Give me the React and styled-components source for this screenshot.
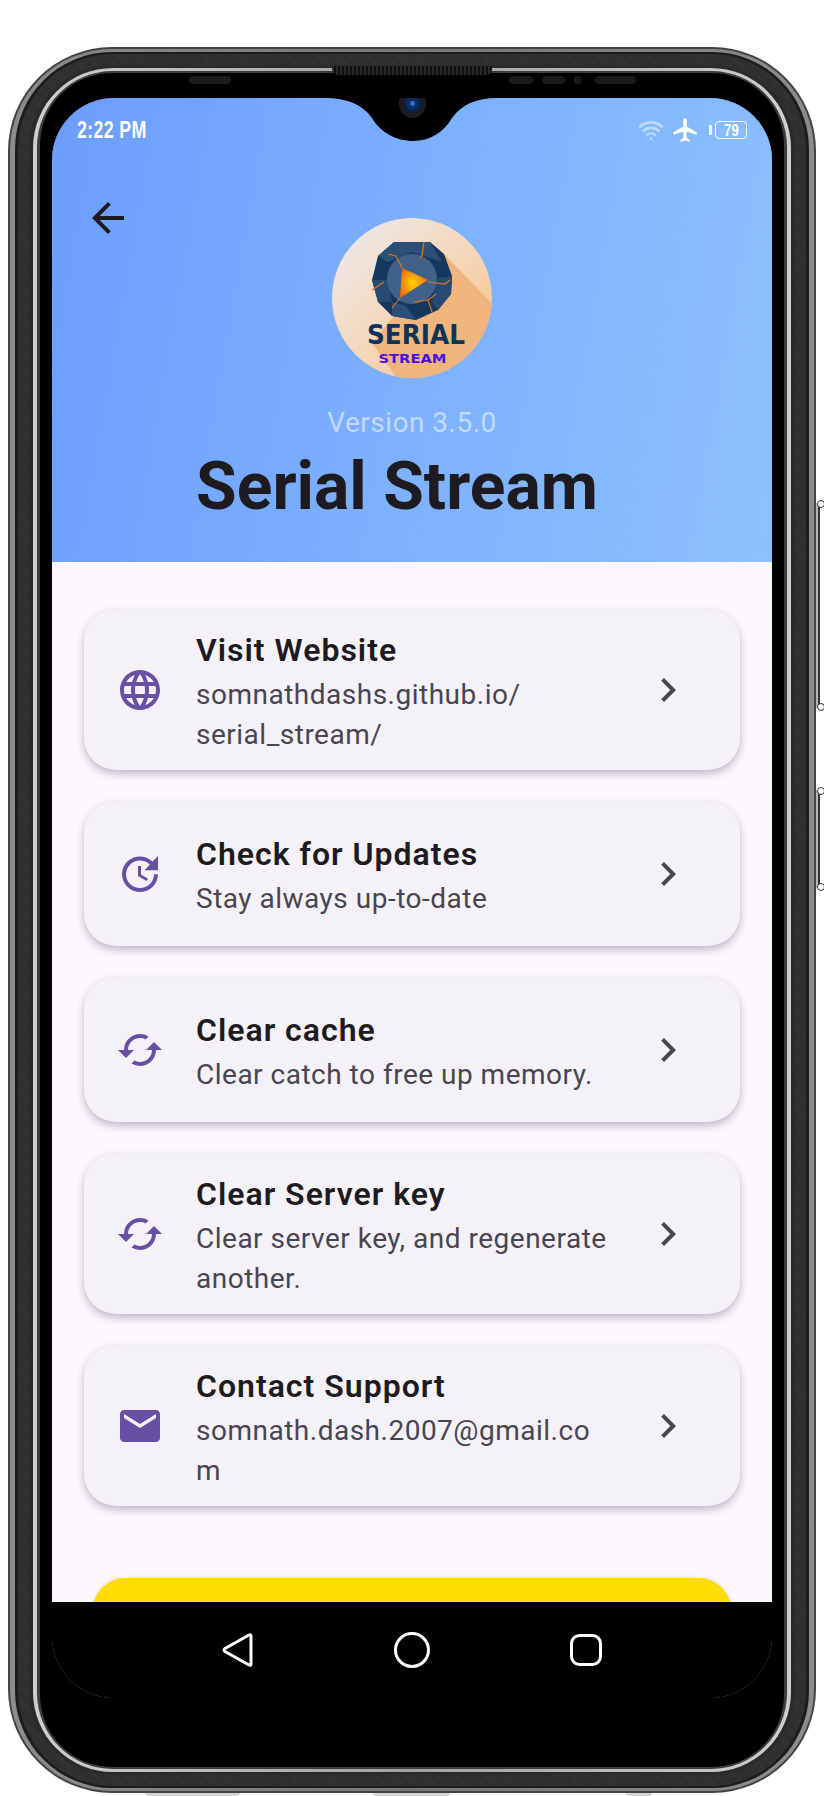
import React from "react";
import styled, { createGlobalStyle } from "styled-components";
import { MdArrowBack, MdLanguage, MdUpdate, MdSync, MdEmail, MdChevronRight, MdAirplanemodeActive } from "react-icons/md";
import { Wifi } from "lucide-react";

const Global = createGlobalStyle`
  html, body { margin: 0; padding: 0; background: #fff; }
  body { width: 824px; height: 1796px; overflow: hidden; font-family: Roboto, "Liberation Sans", sans-serif; }
  * { box-sizing: border-box; }
`;

const Page = styled.div`
  width: 824px;
  height: 1796px;
  padding: 47px 8px 3px;
`;

const Ring = styled.div`
  position: relative;
  background: ${(p) => p.$bg};
  padding: ${(p) => p.$py}px ${(p) => p.$px}px;
  border-radius: ${(p) => p.$radius}px;
`;

const SideButton = styled.div`
  position: absolute;
  right: -4px;
  top: ${(p) => p.$top}px;
  height: ${(p) => p.$height}px;
  width: 4px;
  background: #333;
  border-left: 2px solid #b5b5b5;

  &::before,
  &::after {
    content: "";
    position: absolute;
    left: -1px;
    width: 6px;
    height: 6px;
    border: 1.5px solid #333;
    border-radius: 50%;
    background: #fff;
  }
  &::before { top: -3px; }
  &::after { bottom: -3px; }
`;

const BottomBump = styled.div`
  position: absolute;
  bottom: -3px;
  left: ${(p) => p.$left}px;
  width: ${(p) => p.$width}px;
  height: 3px;
  background: #d4d4d4;
  border-radius: 0 0 3px 3px;
`;

const Bezel = styled.div`
  position: relative;
  background: #000;
  border-radius: 72px;
  padding: 0 12px 69px;
`;

const Speaker = styled.div`
  position: absolute;
  left: 292px;
  top: -7px;
  width: 160px;
  height: 9px;
  border-radius: 0 0 6px 6px;
  background: repeating-linear-gradient(90deg, #2c2c2c 0 2px, #111 2px 4px);
`;

const SensorRow = styled.div`
  height: 25px;
  display: flex;
  align-items: flex-start;
  padding: 3px 0 0 137px;
`;

const Sensor = styled.span`
  display: block;
  flex: none;
  height: 8px;
  width: ${(p) => p.$w}px;
  margin-left: ${(p) => p.$gap}px;
  border-radius: 4px;
  background: #1b1b1b;
`;

const Screen = styled.div`
  position: relative;
  width: 720px;
  height: 1600px;
  border-radius: 62px;
  overflow: hidden;
  display: flex;
  flex-direction: column;
  background: #fef7ff;
  box-shadow: inset 0 0 0 1px #14082a;
`;

const NotchWrap = styled.div`
  position: absolute;
  top: 0;
  left: 274px;
  width: 171px;
  height: 43px;
  z-index: 3;
  line-height: 0;
`;

const Camera = styled.div`
  position: absolute;
  top: -9px;
  left: 73px;
  width: 27px;
  height: 29px;
  border-radius: 50%;
  background: radial-gradient(circle at 50% 50%, #2a6fc4 0 2px, #0a2c63 3px 6px, #0a1e3f 8px, #1c1c20 10px);
`;

const Header = styled.header`
  flex: none;
  height: 464px;
  background: linear-gradient(100deg, #6b9dfe 0%, #7db0ff 50%, #8cc1ff 100%);
  color: #1d1b20;
`;

const StatusBar = styled.div`
  height: 64px;
  padding: 0 25px;
  display: flex;
  align-items: center;
  justify-content: space-between;
  color: #fff;
`;

const Clock = styled.span`
  display: inline-block;
  width: 70px;
  font: 700 24px/1 "Liberation Sans", sans-serif;
  white-space: nowrap;
  transform: scaleX(0.74);
  transform-origin: left center;
  letter-spacing: 0.5px;
`;

const StatusIcons = styled.div`
  display: flex;
  align-items: center;
`;

const DimWifi = styled(Wifi)`
  opacity: 0.45;
  margin-right: 9px;
`;

const Plane = styled(MdAirplanemodeActive)`
  margin-left: -2px;
`;

const BatteryNub = styled.span`
  width: 3px;
  height: 10px;
  background: #fff;
  border-radius: 1px;
  margin: 0 3px 0 10px;
`;

const Battery = styled.span`
  width: 32px;
  height: 18px;
  border: 1.5px solid #fff;
  border-radius: 4px;
  display: flex;
  align-items: center;
  justify-content: center;
  font: 700 17px/1 "Liberation Sans", sans-serif;
  color: #fff;
`;

const BatteryText = styled.span`
  display: inline-block;
  transform: scaleX(0.78);
`;

const Hero = styled.div`
  display: grid;
  grid-template-columns: 1fr auto 1fr;
  padding: 32px 32px 0;
`;

const BackButton = styled.div`
  width: 48px;
  height: 48px;
  color: #1d1b20;
  line-height: 0;
`;

const LogoBox = styled.div`
  width: 160px;
  height: 160px;
  margin-top: 24px;
  line-height: 0;
`;

const Version = styled.div`
  margin-top: 27px;
  text-align: center;
  font-size: 28px;
  line-height: 36px;
  letter-spacing: 0.5px;
  color: rgba(255, 255, 255, 0.55);
`;

const AppName = styled.h1`
  margin: 10px 0 0;
  padding-right: 30px;
  text-align: center;
  font-size: 66px;
  line-height: 72px;
  font-weight: 700;
  color: #1d1b20;
`;

const Body = styled.main`
  flex: 1;
  min-height: 0;
  overflow: hidden;
  padding: 47px 32px 0;
  background: #fef7ff;
`;

const CardList = styled.div`
  display: flex;
  flex-direction: column;
  gap: 31px;
`;

const Card = styled.div`
  min-height: 145px;
  padding: 16px 48px 16px 32px;
  display: grid;
  grid-template-columns: 48px 32px 414px 34px 48px;
  align-items: center;
  border-radius: 32px;
  background: #f5f1f8;
  box-shadow: 0 4px 8px rgba(40, 30, 50, 0.28), 0 0 2px rgba(40, 30, 50, 0.06);
`;

const CardIcon = styled.div`
  grid-column: 1;
  color: #6750a4;
  line-height: 0;
`;

const SyncIcon = styled(MdSync)`
  transform: rotate(90deg);
`;

const CardText = styled.div`
  grid-column: 3;
  min-width: 0;
`;

const CardTitle = styled.div`
  font-size: 32px;
  line-height: 50px;
  font-weight: 600;
  letter-spacing: 1px;
  color: #1d1b20;
`;

const CardSub = styled.div`
  font-size: 28px;
  line-height: 39.5px;
  letter-spacing: 0.5px;
  color: #49454f;
  overflow-wrap: anywhere;
`;

const CardChevron = styled.div`
  grid-column: 5;
  color: #49454f;
  line-height: 0;
`;

const DonateButton = styled.div`
  margin: 72px 9px 0;
  height: 120px;
  border-radius: 32px;
  background: #ffdd00;
  box-shadow: 0 0 4px rgba(60, 40, 80, 0.15);
`;

const NavBar = styled.nav`
  flex: none;
  height: 96px;
  background: #000;
  display: grid;
  grid-template-columns: repeat(3, 174px);
  justify-content: center;
  align-items: center;
`;

const NavItem = styled.div`
  display: flex;
  justify-content: center;
  align-items: center;
  height: 96px;
  line-height: 0;
`;

const Logo = () => (
  <svg viewBox="0 0 160 160" width="160" height="160">
    <defs>
      <linearGradient id="lg" x1="0" y1="0" x2="1" y2="1">
        <stop offset="0" stopColor="#ececf2" />
        <stop offset="0.55" stopColor="#f5d6b6" />
        <stop offset="1" stopColor="#f8bd82" />
      </linearGradient>
      <clipPath id="lc"><circle cx="80" cy="80" r="80" /></clipPath>
      <radialGradient id="tri" cx="0.45" cy="0.5" r="0.6">
        <stop offset="0" stopColor="#ffd500" />
        <stop offset="1" stopColor="#ff5a00" />
      </radialGradient>
    </defs>
    <circle cx="80" cy="80" r="80" fill="url(#lg)" />
    <g clipPath="url(#lc)">
      <polygon points="112,36 170,96 170,170 72,170 40,125" fill="#efb57d" />
    </g>
    <polygon points="62,24 98,24 112,36 120,58 119,76 106,92 84,102 60,98 46,84 40,62 46,38" fill="#16375c" />
    <polygon points="62,24 98,24 110,44 80,34 56,44 46,38" fill="#2c4f78" />
    <polygon points="40,62 56,62 60,84 46,84" fill="#264a72" />
    <polygon points="60,84 74,88 84,102 60,98" fill="#2a4f78" />
    <polygon points="120,58 106,60 100,84 106,92 119,76" fill="#264a72" />
    <circle cx="80" cy="61" r="25" fill="#41618a" />
    <g fill="none" stroke="#d9761a" strokeWidth="1.2">
      <path d="M56 36 L64 38 L70 50" />
      <path d="M96 64 L113 66 L118 62" />
      <path d="M68 80 L60 90" />
      <path d="M40 72 L52 64" />
      <path d="M82 84 L96 82 L100 94 M96 82 L104 76" />
      <path d="M92 24 L90 38 L88 40" />
    </g>
    <polygon points="70,50 96,62 68,80" fill="url(#tri)" />
    <text x="84" y="126" textAnchor="middle" fontFamily="'DejaVu Sans', sans-serif" fontWeight="700" fontSize="27" textLength="98" lengthAdjust="spacingAndGlyphs" fill="#0f3358">SERIAL</text>
    <text x="80.5" y="145" textAnchor="middle" fontFamily="'DejaVu Sans', sans-serif" fontWeight="700" fontSize="12" textLength="68" lengthAdjust="spacingAndGlyphs" fill="#4a10e0">STREAM</text>
  </svg>
);

const items = [
  { icon: <MdLanguage size={48} />, title: "Visit Website", sub: "somnathdashs.github.io/ serial_stream/" },
  { icon: <MdUpdate size={48} />, title: "Check for Updates", sub: "Stay always up-to-date" },
  { icon: <SyncIcon size={48} />, title: "Clear cache", sub: "Clear catch to free up memory." },
  { icon: <SyncIcon size={48} />, title: "Clear Server key", sub: "Clear server key, and regenerate another." },
  { icon: <MdEmail size={48} />, title: "Contact Support", sub: "somnath.dash.2007@gmail.com" },
];

const grain = "repeating-linear-gradient(45deg, #343434 0 1px, #2c2c2c 1px 2px)";

export default function App() {
  return (
    <>
      <Global />
      <Page>
        <Ring $bg="#444" $py={2} $px={2} $radius={104}>
          <SideButton $top={456} $height={205} />
          <SideButton $top={743} $height={98} />
          <BottomBump $left={137} $width={95} />
          <BottomBump $left={365} $width={77} />
          <BottomBump $left={618} $width={26} />
          <Ring $bg="linear-gradient(90deg, #8c8c8c, #777 50%, #8c8c8c)" $py={3} $px={5} $radius={102}>
            <Ring $bg="#1c1c1c" $py={2} $px={3} $radius={97}>
              <Ring $bg={grain} $py={11} $px={11} $radius={95}>
                <Ring $bg="#2a2a2a" $py={3} $px={4} $radius={84}>
                  <Ring $bg="linear-gradient(90deg, #cfcfcf, #a0a0a0 50%, #cfcfcf)" $py={3} $px={4} $radius={80}>
                    <Ring $bg="#3c3c3c" $py={2} $px={3} $radius={76}>
                      <Bezel>
                        <Speaker />
                        <SensorRow>
                          <Sensor $w={42} $gap={0} />
                          <Sensor $w={24} $gap={278} />
                          <Sensor $w={23} $gap={9} />
                          <Sensor $w={7} $gap={9} />
                          <Sensor $w={41} $gap={14} />
                        </SensorRow>
                        <Screen>
                          <NotchWrap>
                            <svg width="171" height="43" viewBox="0 0 171 43">
                              <path d="M0 0 C20 0 36 6 46 20 C54 34 70 43 87 43 C104 43 118 34 126 20 C136 6 151 0 171 0 Z" fill="#000" />
                            </svg>
                            <Camera />
                          </NotchWrap>
                          <Header>
                            <StatusBar>
                              <Clock>2:22 PM</Clock>
                              <StatusIcons>
                                <DimWifi size={26} strokeWidth={2.4} />
                                <Plane size={28} />
                                <BatteryNub />
                                <Battery><BatteryText>79</BatteryText></Battery>
                              </StatusIcons>
                            </StatusBar>
                            <Hero>
                              <BackButton><MdArrowBack size={48} /></BackButton>
                              <LogoBox><Logo /></LogoBox>
                            </Hero>
                            <Version>Version 3.5.0</Version>
                            <AppName>Serial Stream</AppName>
                          </Header>
                          <Body>
                            <CardList>
                              {items.map((it) => (
                                <Card key={it.title}>
                                  <CardIcon>{it.icon}</CardIcon>
                                  <CardText>
                                    <CardTitle>{it.title}</CardTitle>
                                    <CardSub>{it.sub}</CardSub>
                                  </CardText>
                                  <CardChevron><MdChevronRight size={48} /></CardChevron>
                                </Card>
                              ))}
                            </CardList>
                            <DonateButton />
                          </Body>
                          <NavBar>
                            <NavItem>
                              <svg width="34" height="36" viewBox="0 0 34 36" fill="none" stroke="#fff" strokeWidth="3" strokeLinejoin="round">
                                <path d="M30 4 L30 32 Q30 34 28 33 L4 19.5 Q2 18 4 16.5 L28 3 Q30 2 30 4 Z" />
                              </svg>
                            </NavItem>
                            <NavItem>
                              <svg width="38" height="38" viewBox="0 0 38 38" fill="none" stroke="#fff" strokeWidth="3">
                                <circle cx="19" cy="19" r="16.5" />
                              </svg>
                            </NavItem>
                            <NavItem>
                              <svg width="34" height="34" viewBox="0 0 34 34" fill="none" stroke="#fff" strokeWidth="3">
                                <rect x="2.5" y="2.5" width="29" height="29" rx="8" />
                              </svg>
                            </NavItem>
                          </NavBar>
                        </Screen>
                      </Bezel>
                    </Ring>
                  </Ring>
                </Ring>
              </Ring>
            </Ring>
          </Ring>
        </Ring>
      </Page>
    </>
  );
}
